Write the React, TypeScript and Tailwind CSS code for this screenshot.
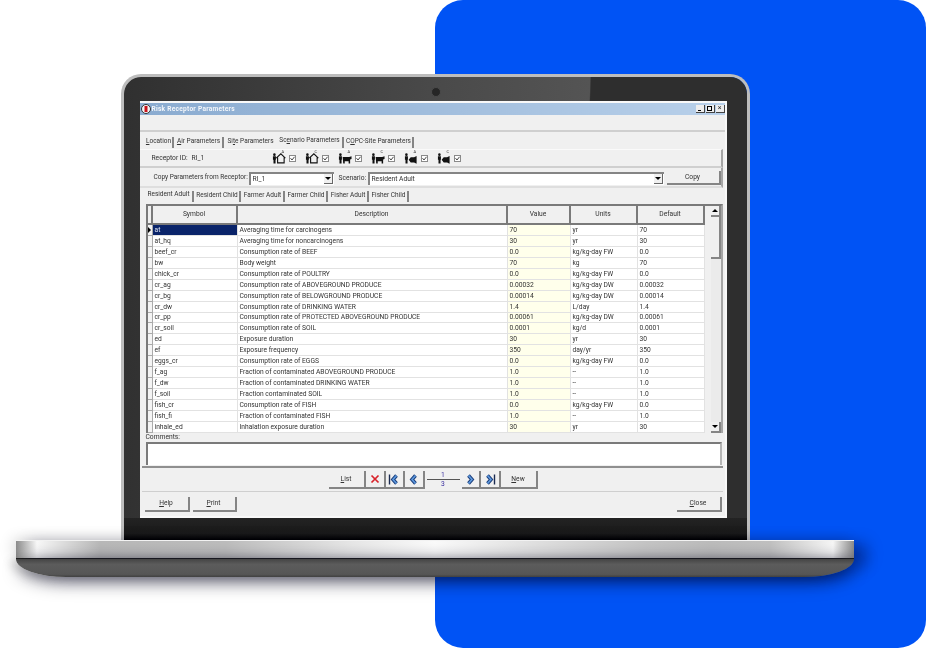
import { ReactNode } from "react";

const rows = [
  ["at", "Averaging time for carcinogens", "70", "yr", "70"],
  ["at_hq", "Averaging time for noncarcinogens", "30", "yr", "30"],
  ["beef_cr", "Consumption rate of BEEF", "0.0", "kg/kg-day FW", "0.0"],
  ["bw", "Body weight", "70", "kg", "70"],
  ["chick_cr", "Consumption rate of POULTRY", "0.0", "kg/kg-day FW", "0.0"],
  ["cr_ag", "Consumption rate of ABOVEGROUND PRODUCE", "0.00032", "kg/kg-day DW", "0.00032"],
  ["cr_bg", "Consumption rate of BELOWGROUND PRODUCE", "0.00014", "kg/kg-day DW", "0.00014"],
  ["cr_dw", "Consumption rate of DRINKING WATER", "1.4", "L/day", "1.4"],
  ["cr_pp", "Consumption rate of PROTECTED ABOVEGROUND PRODUCE", "0.00061", "kg/kg-day DW", "0.00061"],
  ["cr_soil", "Consumption rate of SOIL", "0.0001", "kg/d", "0.0001"],
  ["ed", "Exposure duration", "30", "yr", "30"],
  ["ef", "Exposure frequency", "350", "day/yr", "350"],
  ["eggs_cr", "Consumption rate of EGGS", "0.0", "kg/kg-day FW", "0.0"],
  ["f_ag", "Fraction of contaminated ABOVEGROUND PRODUCE", "1.0", "--", "1.0"],
  ["f_dw", "Fraction of contaminated DRINKING WATER", "1.0", "--", "1.0"],
  ["f_soil", "Fraction contaminated SOIL", "1.0", "--", "1.0"],
  ["fish_cr", "Consumption rate of FISH", "0.0", "kg/kg-day FW", "0.0"],
  ["fish_fi", "Fraction of contaminated FISH", "1.0", "--", "1.0"],
  ["inhale_ed", "Inhalation exposure duration", "30", "yr", "30"],
];

const gridCols = "grid grid-cols-[5px_85px_270px_63px_67px_67px]";
const cell = "flex items-center pl-[2px] border-r border-b border-[#e2e2e2] overflow-hidden whitespace-nowrap";

function Raised({ className, children }: { className: string; children: ReactNode }) {
  return (
    <div className={"flex items-center justify-center bg-[#f0f0f0] border-r-2 border-b-2 border-[#858585] " + className}>
      {children}
    </div>
  );
}

function Tab({ width, active, plain, children }: { width: string; active?: boolean; plain?: boolean; children: ReactNode }) {
  return (
    <div className={"flex items-center justify-center h-[11px] pl-[2px] whitespace-nowrap " + width + (plain ? "" : " border-r-2 border-[#858585]")}>
      <span className={active ? "-translate-y-[1px]" : ""}>{children}</span>
    </div>
  );
}

function Check() {
  return (
    <svg width="7" height="7" viewBox="0 0 7 7" className="ml-[3px]">
      <rect x="0.5" y="0.5" width="6" height="6" fill="#fff" stroke="#8a8a8a" />
      <path d="M1.5 3.2 3 5 5.5 1.8" fill="none" stroke="#333" strokeWidth="0.9" />
    </svg>
  );
}

function Receptor({ kind, letter }: { kind: "house" | "cow" | "fish"; letter: string }) {
  return (
    <div className="relative flex items-center w-[33px]">
      <svg width="14" height="12" viewBox="0 0 15 12" fill="#111">
        <circle cx="2.6" cy="2.4" r="1.4" />
        <path d="M1 4h3.2v4H3.8v4H1.6V8H1z" />
        {kind === "house" && <path d="M4.5 6.2 9.5 1.5l4.8 4.7M6 5.5V11.2H13V5.5" fill="none" stroke="#111" strokeWidth="1.2" />}
        {kind === "cow" && <path d="M5 5h7l2.5-1v3l-1.5.6V12h-1.6V9.5H7.2V12H5.6z" />}
        {kind === "fish" && <path d="M5 8 7.2 5.2h3.6l2.7-1.4v8.4l-2.7-1.4H7.2z" />}
      </svg>
      <span className="absolute left-[10px] top-[-2px] text-[4px] leading-none">{letter}</span>
      <Check />
    </div>
  );
}

function Chevrons({ dir, bar }: { dir: "left" | "right"; bar?: boolean }) {
  const d = dir === "left" ? "M8.5 2.5 5 6.5 8.5 10.5" : "M4.5 2.5 8 6.5 4.5 10.5";
  const barX = dir === "left" ? 1.5 : 11.5;
  return (
    <svg width="13" height="13" viewBox="0 0 13 13">
      {bar && <path d={`M${barX} 1.5v10`} stroke="#1a2a50" strokeWidth="1.4" />}
      <path d={d} fill="none" stroke="#1d3f7c" strokeWidth="3.6" />
      <path d={d} fill="none" stroke="#5d9ae0" strokeWidth="1.6" />
    </svg>
  );
}

function DropArrow() {
  return (
    <div className="flex items-center justify-center w-[9px] h-[10px] bg-[#f0f0f0] border-r border-b border-[#666]">
      <div className="w-0 h-0 border-l-[3px] border-r-[3px] border-t-[3px] border-l-transparent border-r-transparent border-t-black" />
    </div>
  );
}

function ParameterWindow() {
  return (
    <div className="flex flex-col w-[587px] h-[417px] bg-[#f0f0f0] border-t-2 border-r-2 border-b-2 border-[#f8f8f8] text-[6.7px] text-[#333] font-['Roboto',sans-serif] blur-[0.35px] overflow-hidden">
      {/* title bar */}
      <div className="flex items-center justify-between h-[12px] pl-[1px] bg-[linear-gradient(90deg,#8aabd0,#b8d0ea)]">
        <div className="flex items-center gap-[1px]">
          <svg width="10" height="10" viewBox="0 0 10 10">
            <circle cx="5" cy="5" r="4.5" fill="#f5f5f5" stroke="#333" />
            <path d="M3.5 2h3v6h-3z" fill="#c9121b" />
          </svg>
          <span className="translate-y-[1px] text-[#f4f7fb] font-bold text-[6.6px] tracking-[0.25px]">Risk Receptor Parameters</span>
        </div>
        <div className="flex gap-[1px]">
          <div className="flex items-end justify-center w-[9px] h-[8px] bg-[#eee] border-r border-b border-[#444]"><span className="w-[3px] h-[1px] mb-[1px] bg-black" /></div>
          <div className="flex items-center justify-center w-[9px] h-[8px] bg-[#eee] border-r border-b border-[#444]"><span className="w-[5px] h-[5px] border border-black" /></div>
          <div className="flex items-center justify-center w-[9px] h-[8px] bg-[#eee] border-r border-b border-[#444] text-[7px] leading-none">×</div>
        </div>
      </div>

      {/* empty menu strip */}
      <div className="h-[17px] shrink-0 border-b-2 border-[#cfcfcf]" />

      {/* main tabs */}
      <div className="flex items-center h-[14px] shrink-0 mt-[3px] pl-[4px] text-[6.5px]">
        <Tab width="w-[30px]"><u>L</u>ocation</Tab>
        <Tab width="w-[50px]"><u>A</u>ir Parameters</Tab>
        <Tab width="w-[52px]" plain>Si<u>t</u>e Parameters</Tab>
        <Tab width="w-[68px]" active>Sc<u>e</u>nario Parameters</Tab>
        <Tab width="w-[70px]">C<u>O</u>PC-Site Parameters</Tab>
      </div>

      {/* receptor row */}
      <div className="flex items-center h-[19px] shrink-0 mr-[2px] border-t border-b-2 border-t-[#fafafa] border-b-[#cfcfcf] border-r-2 border-r-[#a5a5a5]">
        <span className="ml-[12px] w-[40px] whitespace-nowrap">Receptor ID:</span>
        <span className="w-[80px]">RI_1</span>
        <Receptor kind="house" letter="A" />
        <Receptor kind="house" letter="C" />
        <Receptor kind="cow" letter="A" />
        <Receptor kind="cow" letter="C" />
        <Receptor kind="fish" letter="A" />
        <Receptor kind="fish" letter="C" />
      </div>

      {/* copy row */}
      <div className="flex items-center h-[20px] shrink-0 mr-[2px] pt-[2px] border-b-2 border-[#dedede] border-r-2 border-r-[#a5a5a5]">
        <span className="ml-[14px] w-[95px] whitespace-nowrap text-[6.5px]">Copy Parameters from Receptor:</span>
        <div className="flex items-center justify-between w-[85px] h-[13px] pl-[2px] pr-[1px] bg-white border-t-2 border-l-2 border-[#858585]">
          <span>RI_1</span>
          <DropArrow />
        </div>
        <span className="ml-[5px] w-[29px]">Scenario:</span>
        <div className="flex items-center justify-between w-[296px] h-[13px] pl-[2px] pr-[1px] bg-white border-t-2 border-l-2 border-[#858585]">
          <span>Resident Adult</span>
          <DropArrow />
        </div>
        <Raised className="ml-[3px] w-[54px] h-[14px]"><span>Copy</span></Raised>
      </div>

      {/* scenario tabs */}
      <div className="flex items-center h-[16px] shrink-0 pl-[4px] text-[6.5px]">
        <Tab width="w-[50px]" active>Resident Adult</Tab>
        <Tab width="w-[47px]">Resident Child</Tab>
        <Tab width="w-[44px]">Farmer Adult</Tab>
        <Tab width="w-[43px]">Farmer Child</Tab>
        <Tab width="w-[41px]">Fisher Adult</Tab>
        <Tab width="w-[40px]">Fisher Child</Tab>
      </div>

      {/* parameter grid */}
      <div className="flex h-[229px] shrink-0 ml-[6px] mr-[2px] border-t-2 border-l-2 border-r-2 border-[#7a7a7a] border-r-[#a5a5a5]">
        <div className="flex flex-col w-[557px]">
          <div className={gridCols + " h-[19px] border-b-2 border-[#7a7a7a]"}>
            <div className="border-r-2 border-[#7a7a7a]" />
            {["Symbol", "Description", "Value", "Units", "Default"].map((h) => (
              <div key={h} className="flex items-center justify-center border-r-2 border-[#7a7a7a]">{h}</div>
            ))}
          </div>
          {rows.map((r, i) => (
            <div key={r[0]} className={gridCols + " h-[10.95px] bg-white"}>
              <div className="flex items-center justify-center bg-[#f4f4f4] border-r border-b border-[#aaa]">
                {i === 0 && <div className="w-0 h-0 border-t-[3px] border-b-[3px] border-l-[3px] border-t-transparent border-b-transparent border-l-black" />}
              </div>
              <div className={cell + (i === 0 ? " bg-[#0a246a] text-[#dfe6f5]" : "")}>{r[0]}</div>
              <div className={cell}>{r[1]}</div>
              <div className={cell + " bg-[#ffffeb]"}>{r[2]}</div>
              <div className={cell}>{r[3]}</div>
              <div className={cell}>{r[4]}</div>
            </div>
          ))}
        </div>
        <div className="flex flex-col flex-1 pl-[6px]">
          <Raised className="h-[11px] shrink-0">
            <div className="w-0 h-0 border-l-[3px] border-r-[3px] border-b-[3px] border-l-transparent border-r-transparent border-b-black" />
          </Raised>
          <div className="h-[42px] shrink-0 bg-[#f0f0f0] border-r-2 border-b-2 border-[#858585]" />
          <div className="flex-1 bg-[#ebebeb]" />
          <Raised className="h-[11px] shrink-0">
            <div className="w-0 h-0 border-l-[3px] border-r-[3px] border-t-[3px] border-l-transparent border-r-transparent border-t-black" />
          </Raised>
        </div>
      </div>

      {/* comments */}
      <div className="flex items-center h-[9px] shrink-0 ml-[6px]">Comments:</div>
      <div className="h-[23px] shrink-0 ml-[6px] mr-[3px] bg-white border-t-2 border-l-2 border-[#7a7a7a] border-r-2 border-r-[#b5b5b5]" />

      {/* record navigator */}
      <div className="flex items-start h-[26px] shrink-0 pl-[187px] pt-[3px] mt-[1px] mx-[2px] border-t-2 border-b border-t-[#8f8f8f] border-b-[#cfcfcf]">
        <Raised className="w-[37px] h-[18px]"><span><u>L</u>ist</span></Raised>
        <Raised className="w-[20px] h-[18px]">
          <svg width="10" height="10" viewBox="0 0 10 10"><path d="M1.5 1.5l7 7M8.5 1.5l-7 7" stroke="#d8222a" strokeWidth="1.7" /></svg>
        </Raised>
        <Raised className="w-[19px] h-[18px]"><Chevrons dir="left" bar /></Raised>
        <Raised className="w-[20px] h-[18px]"><Chevrons dir="left" /></Raised>
        <div className="flex flex-col items-center justify-center w-[37px] h-[17px] text-[#3a2fa0] leading-none">
          <span className="h-[7px]">1</span>
          <div className="w-[33px] h-[1px] bg-[#555]" />
          <span className="h-[7px] mt-[1px]">3</span>
        </div>
        <Raised className="w-[19px] h-[18px]"><Chevrons dir="right" /></Raised>
        <Raised className="w-[20px] h-[18px]"><Chevrons dir="right" bar /></Raised>
        <Raised className="w-[37px] h-[18px]"><span><u>N</u>ew</span></Raised>
      </div>

      {/* bottom actions */}
      <div className="flex items-center flex-1 pl-[5px] pr-[3px]">
        <Raised className="w-[45px] h-[15px]"><span><u>H</u>elp</span></Raised>
        <Raised className="ml-[3px] w-[44px] h-[15px]"><span><u>P</u>rint</span></Raised>
        <Raised className="ml-auto w-[45px] h-[15px]"><span><u>C</u>lose</span></Raised>
      </div>
    </div>
  );
}

export default function App() {
  return (
    <div className="relative w-[926px] h-[648px] overflow-hidden bg-white">
      {/* blue panel behind the laptop */}
      <div className="absolute left-[435px] top-0 w-[491px] h-[648px] rounded-[28px] bg-[#0053f5]" />

      <div className="relative flex flex-col items-center w-[838px] ml-[16px] pt-[74px]">
        {/* lid */}
        <div className="flex flex-col w-[629px] h-[466px] rounded-t-[20px] border-t-[3px] border-x-[3px] border-[#bdbdbd] overflow-hidden">
          <div className="flex-1 pt-[24px] pl-[16px] bg-[linear-gradient(92deg,#303030_0%,#4a4a4a_50%,#545454_73%,#2e2e2e_73.2%,#2e2e2e_100%)]">
            <ParameterWindow />
          </div>
          <div className="h-[22px] shrink-0 bg-[linear-gradient(180deg,#232323,#1a1a1a_70%,#000)]" />
        </div>

        {/* camera, sits over the bezel */}
        <div className="absolute left-[415px] top-[87px] w-[10px] h-[10px] rounded-full bg-[#262626] border border-[#4a4a4a]" />

        {/* base */}
        <div className="w-[838px] h-[19px] border-t border-b border-t-[#f2f2f2] border-b-[#222] bg-[linear-gradient(90deg,#8a8a8a_0%,#f8f8f8_2.5%,#b8b8b8_10%,#bcbcbc_25%,#e6e6e6_40%,#fafafa_50%,#e8e8e8_58%,#c4c4c4_75%,#bbbbbb_83%,#c0c0c0_90%,#f6f6f6_97.5%,#8a8a8a_100%)] shadow-[12px_4px_16px_rgba(0,0,40,0.4),-4px_-2px_14px_rgba(0,0,0,0.12)]" />
        <div className="w-[838px] h-[18px] rounded-b-[50px_18px] bg-[linear-gradient(180deg,#444,#5c5c5c_30%,#565656_85%,#404040)] shadow-[0_8px_16px_rgba(0,0,30,0.35),-6px_2px_10px_rgba(0,0,0,0.2),10px_0_16px_rgba(0,0,40,0.4)]" />
      </div>
    </div>
  );
}
